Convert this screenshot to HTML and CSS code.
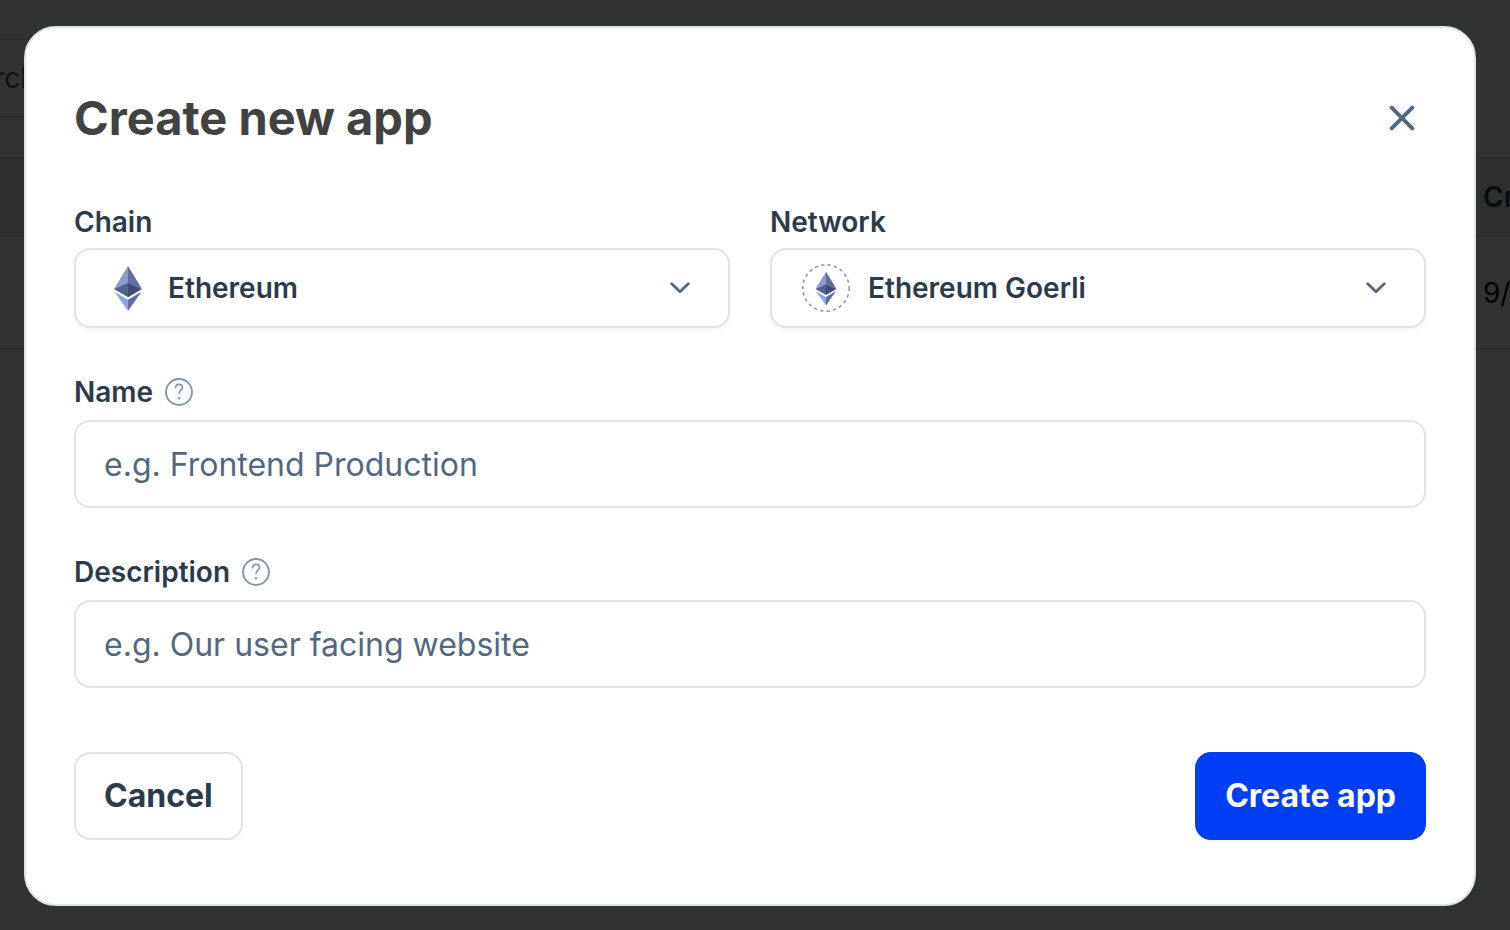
FILE: index.html
```html
<!DOCTYPE html>
<html lang="en">
<head>
<meta charset="utf-8">
<meta name="viewport" content="width=device-width, initial-scale=1">
<title>Create new app</title>
<link rel="stylesheet" href="styles.css">
</head>
<body>
<svg class="sprite" aria-hidden="true">
  <symbol id="eth" viewBox="0 0 28 45">
    <path fill="#8a9acd" d="M14 0 0 23l14-6.500z"/>
    <path fill="#616c9f" d="M14 0v16.500L28 23z"/>
    <path fill="#53618f" d="M14 16.500 0 23l14 8.200z"/>
    <path fill="#424b78" d="M14 16.500v14.700L28 23z"/>
    <path fill="#90a6df" d="M.5 25.800 14 33.800V45z"/>
    <path fill="#616ca2" d="M27.500 25.800 14 33.800V45z"/>
  </symbol>
  <symbol id="chevron" viewBox="0 0 20 12">
    <path d="m1.700 1.700 8.300 8.100 8.300-8.100" fill="none" stroke="currentColor" stroke-width="2.800" stroke-linecap="round" stroke-linejoin="round"/>
  </symbol>
  <symbol id="help" viewBox="0 0 28 28">
    <g fill="none" stroke="currentColor" stroke-linecap="round" stroke-linejoin="round">
      <circle cx="14" cy="14" r="13" stroke-width="1.900"/>
      <path stroke-width="1.700" d="M10.600 9.600c0-2.100 1.400-3.300 3.400-3.300s3.500 1.200 3.500 3.100c0 2.700-3.400 2.700-3.400 5.900"/>
    </g>
    <circle cx="14" cy="20.300" r="1.200" fill="currentColor"/>
  </symbol>
</svg>

<main class="page">
  <input class="search" type="search" placeholder="Search" aria-label="Search apps">
  <table class="apps">
    <thead><tr><th class="spacer"></th><th>Cr</th></tr></thead>
    <tbody><tr><td class="spacer"></td><td>9/</td></tr></tbody>
  </table>
</main>

<div class="overlay">
  <form class="modal" role="dialog" aria-modal="true" aria-labelledby="title">
    <header class="modal-header">
      <h1 class="title" id="title">Create new app</h1>
      <button class="close" type="button" aria-label="Close">
        <svg class="close-icon" viewBox="0 0 26 26"><path d="m2.700 2.700 20.600 20.600m0-20.600L2.700 23.300" fill="none" stroke="currentColor" stroke-width="4" stroke-linecap="round"/></svg>
      </button>
    </header>

    <div class="fields">
      <div class="row">
        <div class="field field-select">
          <label class="label" for="chain">Chain</label>
          <div class="picker">
            <select class="select" id="chain"><option>Ethereum</option></select>
            <span class="picker-icon"><svg class="eth"><use href="#eth"/></svg></span>
            <svg class="chevron"><use href="#chevron"/></svg>
          </div>
        </div>
        <div class="field field-select">
          <label class="label" for="network">Network</label>
          <div class="picker picker-network">
            <select class="select" id="network"><option>Ethereum Goerli</option></select>
            <span class="picker-icon">
              <svg class="eth-ring" viewBox="0 0 48 48">
                <circle cx="24" cy="24" r="23.200" fill="none" stroke="#8197ad" stroke-width="1.500" stroke-dasharray="3.240 3.240"/>
                <use href="#eth" x="13.500" y="7.500" width="21" height="34"/>
              </svg>
            </span>
            <svg class="chevron"><use href="#chevron"/></svg>
          </div>
        </div>
      </div>

      <div class="field">
        <div class="label-row">
          <label class="label" for="name">Name</label>
          <button class="help" type="button" aria-label="About the name"><svg class="help-icon"><use href="#help"/></svg></button>
        </div>
        <input class="input" id="name" type="text" placeholder="e.g. Frontend Production">
      </div>

      <div class="field">
        <div class="label-row">
          <label class="label" for="description">Description</label>
          <button class="help" type="button" aria-label="About the description"><svg class="help-icon"><use href="#help"/></svg></button>
        </div>
        <input class="input" id="description" type="text" placeholder="e.g. Our user facing website">
      </div>
    </div>

    <footer class="actions">
      <button class="button" type="button">Cancel</button>
      <button class="button button-primary" type="submit">Create app</button>
    </footer>
  </form>
</div>
</body>
</html>
```
FILE: styles.css
```css
:root {
  --ink: #2d3a48;
  --slate: #53687f;
  --muted: #8197ad;
  --line: #dbe5ee;
  --blue: #003ef3;
}

*, *::before, *::after { box-sizing: border-box; }

html, body { height: 100%; }

body {
  margin: 0;
  overflow: hidden;
  background: #313332;
  color: var(--ink);
  font-family: Inter, "Liberation Sans", sans-serif;
}

svg { display: block; }
.sprite { position: absolute; width: 0; height: 0; }

/* Dimmed page behind the dialog */
.page {
  padding-top: 38px;
  overflow: hidden;
}

.search {
  display: block;
  width: 50%;
  height: 80px;
  padding: 0;
  border: 2px solid #2c2e2e;
  border-left: 0;
  background: #333232;
  font: 400 28px/36px Inter, "Liberation Sans", sans-serif;
  text-indent: -56px;
}
.search::placeholder { color: #0f1318; opacity: 1; }

.apps {
  width: 100%;
  margin-top: 39px;
  border-collapse: collapse;
  table-layout: fixed;
  font-size: 28px;
  line-height: 36px;
  text-align: left;
  white-space: nowrap;
}
.apps th, .apps td {
  width: 27px;
  padding: 0;
  overflow: hidden;
  border: 2px solid #2c2e2e;
  border-width: 2px 0;
}
.apps .spacer { width: auto; }
.apps th { height: 78px; background: #2e302f; color: #0a0c10; font-weight: 600; }
.apps td { height: 113px; background: #333232; color: #000; }

/* Dialog */
.overlay {
  position: fixed;
  inset: 0;
  padding: 26px 34px 24px 24px;
}

.modal {
  padding: 66px 48px 64px;
  border: 2px solid var(--line);
  border-radius: 32px;
  background: #fff;
}

.modal-header {
  display: flex;
  align-items: center;
  justify-content: space-between;
  margin-bottom: 62px;
}
.title {
  margin: 0;
  color: #424242;
  font-size: 47px;
  font-weight: 700;
  line-height: 48px;
}
.close {
  display: grid;
  place-items: center;
  width: 48px;
  height: 48px;
  padding: 0;
  border: 0;
  background: none;
  color: var(--slate);
}
.close-icon { width: 26px; height: 26px; }

.fields { display: grid; gap: 46px; }
.row { display: grid; grid-template-columns: 1fr 1fr; gap: 40px; }
.field { display: grid; gap: 10px; }
.field-select { gap: 8px; }
.label { font-size: 28px; font-weight: 600; line-height: 36px; }
.label-row { display: flex; align-items: center; gap: 12px; }
.help { padding: 0; border: 0; background: none; color: var(--muted); }
.help-icon { width: 28px; height: 28px; }

.picker {
  display: grid;
  grid-template-columns: 30px 48px 1fr 20px 40px;
  align-items: center;
}
.picker-network { grid-template-columns: 32px 48px 1fr 20px 40px; }
.select {
  grid-area: 1 / 1 / 2 / -1;
  width: 100%;
  height: 80px;
  padding: 0 72px 0 92px;
  border: 2px solid var(--line);
  border-radius: 16px;
  background: #fff;
  box-shadow: 0 2px 4px rgba(45, 58, 72, .06);
  color: var(--ink);
  appearance: none;
  font: 600 28px/36px Inter, "Liberation Sans", sans-serif;
}
.picker-network .select { padding-left: 96px; }
.picker-icon { grid-area: 1 / 2; justify-self: center; pointer-events: none; }
.eth { width: 28px; height: 45px; }
.eth-ring { width: 48px; height: 48px; }
.chevron { grid-area: 1 / 4; width: 20px; height: 12px; color: var(--slate); pointer-events: none; }

.input {
  width: 100%;
  height: 88px;
  padding: 0 28px;
  border: 2px solid var(--line);
  border-radius: 16px;
  background: #fff;
  color: var(--ink);
  font: 400 32px/40px Inter, "Liberation Sans", sans-serif;
}
.input::placeholder { color: var(--slate); opacity: 1; }

.actions { display: flex; justify-content: space-between; margin-top: 64px; }
.button {
  height: 88px;
  padding: 0 28px;
  border: 2px solid var(--line);
  border-radius: 16px;
  background: #fff;
  color: var(--ink);
  font: 700 32px/40px Inter, "Liberation Sans", sans-serif;
}
.button-primary { border-color: var(--blue); background: var(--blue); color: #fff; }
```
